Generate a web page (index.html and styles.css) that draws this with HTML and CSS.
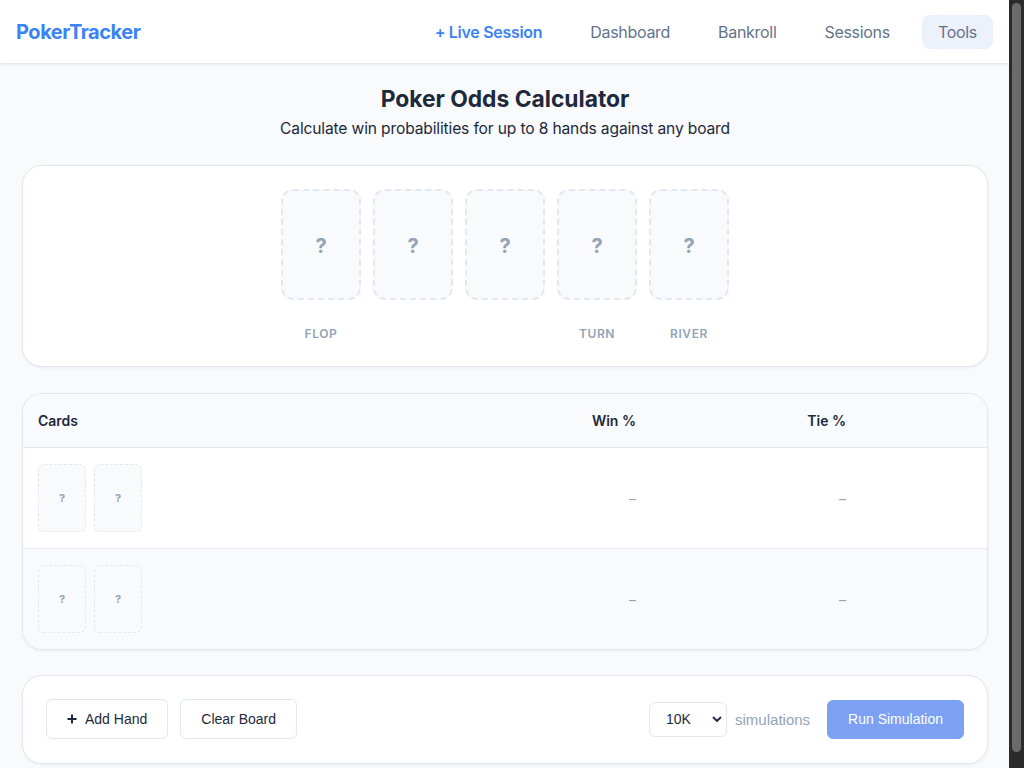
FILE: index.html
```html
<!DOCTYPE html>
<html lang="en">
<head>
<meta charset="utf-8">
<title>PokerTracker – Poker Odds Calculator</title>
<link rel="stylesheet" href="styles.css">
</head>
<body>
<div class="viewport">
<header class="topbar">
  <a class="logo" href="#">PokerTracker</a>
  <nav class="nav">
    <a class="nav-link live" href="#">+ Live Session</a>
    <a class="nav-link" href="#">Dashboard</a>
    <a class="nav-link" href="#">Bankroll</a>
    <a class="nav-link" href="#">Sessions</a>
    <a class="nav-link active" href="#">Tools</a>
  </nav>
</header>

<main class="page">
  <div class="intro">
    <h1 class="title">Poker Odds Calculator</h1>
    <p class="subtitle">Calculate win probabilities for up to 8 hands against any board</p>
  </div>

  <section class="panel board">
    <div class="board-row">
      <div class="board-slot"><div class="board-card">?</div><span class="slot-label">Flop</span></div>
      <div class="board-slot"><div class="board-card">?</div><span class="slot-label"></span></div>
      <div class="board-slot"><div class="board-card">?</div><span class="slot-label"></span></div>
      <div class="board-slot"><div class="board-card">?</div><span class="slot-label">Turn</span></div>
      <div class="board-slot"><div class="board-card">?</div><span class="slot-label">River</span></div>
    </div>
  </section>

  <section class="panel hands">
    <div class="hands-row head">
      <div class="cell cards-col">Cards</div>
      <div class="cell num">Win %</div>
      <div class="cell num">Tie %</div>
      <div class="cell"></div>
    </div>
    <div class="hands-row">
      <div class="cell cards-col"><div class="hole"><div class="hole-card">?</div><div class="hole-card">?</div></div></div>
      <div class="cell num dash">–</div>
      <div class="cell num dash">–</div>
      <div class="cell"></div>
    </div>
    <div class="hands-row alt">
      <div class="cell cards-col"><div class="hole"><div class="hole-card">?</div><div class="hole-card">?</div></div></div>
      <div class="cell num dash">–</div>
      <div class="cell num dash">–</div>
      <div class="cell"></div>
    </div>
  </section>

  <section class="panel actions">
    <div class="actions-left">
      <button class="btn" type="button"><svg class="plus" width="10" height="10" viewBox="0 0 10 10"><path d="M5 0.5v9M0.5 5h9" stroke="#1e293b" stroke-width="2"/></svg>Add Hand</button>
      <button class="btn" type="button">Clear Board</button>
    </div>
    <div class="actions-right">
      <div class="select-wrap">
        <select class="sim-select">
          <option>10K</option>
          <option>50K</option>
          <option>100K</option>
        </select>
        <svg class="chev" width="10" height="7" viewBox="0 0 10 7"><path d="M1.5 1.5l3.5 3.5 3.5-3.5" fill="none" stroke="#1e293b" stroke-width="1.8" stroke-linecap="round" stroke-linejoin="round"/></svg>
      </div>
      <span class="sim-label">simulations</span>
      <button class="btn primary" type="button">Run Simulation</button>
    </div>
  </section>
</main>
</div>
<div class="scrollbar" aria-hidden="true"><div class="scroll-thumb"></div></div>
</body>
</html>
```

FILE: styles.css
```css
html {
  background: #f8fafc;
  overflow: hidden;
}
body {
  margin: 0;
  font-family: Inter, "Noto Sans", sans-serif;
  color: #1e293b;
  background: #f8fafc;
  display: flex;
  align-items: flex-start;
}
a {
  text-decoration: none;
}
.viewport {
  flex: 1;
  min-width: 0;
}
.scrollbar {
  flex: 0 0 15px;
  width: 15px;
  height: 768px;
  background: #2b2b2b;
  box-sizing: border-box;
  padding: 3px 3px 16px 3px;
}
.scroll-thumb {
  height: 100%;
  background: #6b6b6b;
  border-radius: 5px;
}

.topbar {
  height: 63px;
  background: #ffffff;
  box-shadow: 0 1px 3px rgba(15, 23, 42, 0.12);
  display: flex;
  align-items: center;
  justify-content: space-between;
  padding: 0 16px;
  position: relative;
}
.logo {
  font-size: 20px;
  font-weight: 700;
  color: #3b82f6;
  letter-spacing: -0.45px;
}
.nav {
  display: flex;
  align-items: center;
  gap: 16px;
}
.nav-link {
  font-size: 16px;
  line-height: 24px;
  padding: 5px 16px;
  border-radius: 8px;
  color: #64748b;
  letter-spacing: -0.3px;
}
.nav-link.live {
  color: #3b82f6;
  font-weight: 600;
}
.nav-link.active {
  background: #ecf1fc;
}

.page {
  display: flex;
  flex-direction: column;
  gap: 26px;
  padding: 20px 21px 22px 22px;
}
.intro {
  text-align: center;
  margin-bottom: -2px;
}
.title {
  margin: 0;
  font-size: 22.8px;
  line-height: 32px;
  font-weight: 700;
  color: #1e293b;
}
.subtitle {
  margin: 2px 0 0;
  font-size: 15.6px;
  line-height: 24px;
  color: #1e293b;
  letter-spacing: -0.15px;
}

.panel {
  background: #ffffff;
  border: 1px solid #e2e8f0;
  border-radius: 20px;
  box-shadow: 0 1px 3px rgba(15, 23, 42, 0.06);
}

.board {
  padding: 23px 24px 24px;
}
.board-row {
  display: flex;
  justify-content: center;
  gap: 12px;
}
.board-slot {
  display: flex;
  flex-direction: column;
  align-items: center;
  width: 80px;
}
.board-card {
  width: 80px;
  height: 111px;
  box-sizing: border-box;
  border: 2px dashed #e2e8f0;
  border-radius: 12px;
  background: #f8fafc;
  display: flex;
  align-items: center;
  justify-content: center;
  font-size: 20px;
  font-weight: 700;
  color: #94a3b8;
  padding-top: 2px;
}
.slot-label {
  margin-top: 25px;
  height: 17px;
  line-height: 17px;
  font-size: 12px;
  font-weight: 600;
  letter-spacing: 0.6px;
  text-transform: uppercase;
  color: #94a3b8;
}

.hands {
  overflow: hidden;
}
.hands-row {
  display: grid;
  grid-template-columns: 1fr 160px 210px 125px;
  border-top: 1px solid #e2e8f0;
}
.hands-row.head {
  border-top: 0;
  background: #f8fafc;
  height: 53px;
  align-items: center;
  font-size: 14px;
  font-weight: 600;
  color: #1e293b;
}
.hands-row.alt {
  background: #f8fafc;
}
.cell {
  padding: 0 16px;
  display: flex;
  align-items: center;
}
.cell.num {
  justify-content: flex-end;
}
.cell.dash {
  font-size: 14px;
  color: #94a3b8;
}
.cards-col {
  padding-left: 15px;
}
.hole {
  display: flex;
  gap: 8px;
  padding: 16px 0;
}
.hole-card {
  width: 48px;
  height: 68px;
  box-sizing: border-box;
  border: 1px dashed #e2e8f0;
  border-radius: 6px;
  background: #f8fafc;
  display: flex;
  align-items: center;
  justify-content: center;
  font-size: 11px;
  font-weight: 700;
  color: #94a3b8;
}

.actions {
  display: flex;
  align-items: center;
  justify-content: space-between;
  padding: 23px 23px 24px;
  margin-top: -1px;
}
.actions-left {
  display: flex;
  gap: 12px;
}
.actions-right {
  display: flex;
  align-items: center;
}
.btn {
  font-family: "Liberation Sans", Arial, sans-serif;
  font-size: 14px;
  height: 40px;
  padding: 0 20px;
  border: 1px solid #e2e8f0;
  border-radius: 6px;
  background: #ffffff;
  color: #1e293b;
  display: flex;
  align-items: center;
  gap: 8px;
  cursor: pointer;
}
.plus {
  display: block;
}
.btn.primary {
  background: #7ca1f3;
  border-color: #7ca1f3;
  color: #ffffff;
  height: 39px;
  padding: 0 20px;
}
.select-wrap {
  position: relative;
}
.sim-select {
  appearance: none;
  -webkit-appearance: none;
  width: 78px;
  height: 35px;
  padding: 0 0 0 16px;
  border: 1px solid #e2e8f0;
  border-radius: 6px;
  background: #ffffff;
  font-family: "Liberation Sans", Arial, sans-serif;
  font-size: 14px;
  color: #1e293b;
  display: block;
}
.chev {
  position: absolute;
  right: 5px;
  top: 14px;
  pointer-events: none;
}
.sim-label {
  font-family: "Liberation Sans", Arial, sans-serif;
  font-size: 15px;
  color: #94a3b8;
  margin: 0 17px 0 8px;
}
```
